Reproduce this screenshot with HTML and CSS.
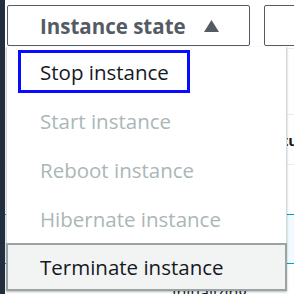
FILE: index.html
```html
<!DOCTYPE html>
<html lang="en">
<head>
  <meta charset="UTF-8" />
  <title>Instance state</title>
  <link rel="stylesheet" href="styles.css">
</head>
<body>
  <div class="main">
    <div class="toolbar">
      <div class="dropdown">
        <button class="state-btn">
          <span>Instance state</span>
          <svg class="caret" width="17" height="14" viewBox="0 0 17 14"><polygon points="8.5,1 16,13 1,13" fill="#545b64"/></svg>
        </button>
        <ul class="menu">
          <li class="item"><span class="label focus">Stop instance</span></li>
          <li class="item off"><span class="label">Start instance</span></li>
          <li class="item off"><span class="label">Reboot instance</span></li>
          <li class="item off"><span class="label">Hibernate instance</span></li>
          <li class="item hover"><span class="label">Terminate instance</span></li>
        </ul>
      </div>
      <button class="other-btn" aria-label="Actions"></button>
    </div>

    <div class="rows">
      <div class="row tall"></div>
      <div class="row head"><span class="cell-head">Status</span></div>
      <div class="row"></div>
      <div class="row selected"></div>
      <div class="row last"><span class="cell">Initializing</span></div>
    </div>
  </div>
</body>
</html>
```

FILE: styles.css
```css
* { box-sizing: border-box; }
html, body {
  margin: 0; padding: 0;
  width: 294px; height: 294px;
  overflow: hidden;
  background: #fff;
  font-family: "Open Sans", Arial, sans-serif;
}
.main {
  height: 100%;
  overflow: hidden;
  border-left: 5px solid #232f3e;
}
.toolbar {
  display: flex;
  gap: 14px;
  height: 49px;
  padding: 5px 0 0 2px;
  border-bottom: 1px solid #eaeded;
}
.dropdown { position: relative; }
.state-btn, .other-btn {
  height: 41px;
  border: 1px solid #545b64;
  border-radius: 2px;
  background: #fff;
  color: #545b64;
  font-family: inherit;
  font-weight: bold;
  font-size: 20.5px;
}
.state-btn {
  width: 243px;
  display: flex;
  align-items: center;
  padding: 0 0 0 32px;
}
.caret { margin-left: 17px; }
.other-btn {
  width: 60px;
  flex-shrink: 0;
}
.menu {
  position: absolute;
  top: 42px;
  left: -1px;
  width: 281px;
  margin: 0;
  padding: 0;
  list-style: none;
  background: #fff;
  border-left: 1px solid #d5dbdb;
  border-right: 1px solid #d5dbdb;
  box-shadow: 0 1px 2px rgba(0, 28, 36, 0.3);
  z-index: 10;
}
.item {
  height: 49px;
  display: flex;
  align-items: center;
  padding-left: 11px;
  font-size: 20.5px;
  color: #16191f;
}
.item.off { color: #aab7b8; }
.item.hover {
  height: 48px;
  margin-left: -1px;
  margin-right: -1px;
  padding-left: 12px;
  background: #f2f3f3;
  border: 2px solid #9ba3a3;
}
.label {
  display: inline-flex;
  align-items: center;
  height: 43px;
  padding: 0 18px 0 19px;
  border: 3px solid transparent;
}
.item.hover .label { padding-left: 17px; }
.label.focus { border-color: #0a0aff; }
.rows { margin-left: -5px; }
.row {
  height: 50px;
  border-bottom: 1px solid #eaeded;
  display: flex;
  align-items: center;
}
.row.tall { height: 66px; }
.cell-head {
  margin-left: 258px;
  font-size: 15px;
  font-weight: bold;
  color: #16191f;
  white-space: nowrap;
}
.row.selected {
  height: 50px;
  border-top: 1px solid #00a1c9;
  border-bottom: 1px solid #00a1c9;
  margin-top: -1px;
  background: linear-gradient(to right, #232f3e 5px, #f1faff 5px);
}
.row.last { align-items: flex-start; border-bottom: none; }
.cell {
  margin: 17px 0 0 172px;
  font-size: 16px;
  color: #16191f;
}
```
